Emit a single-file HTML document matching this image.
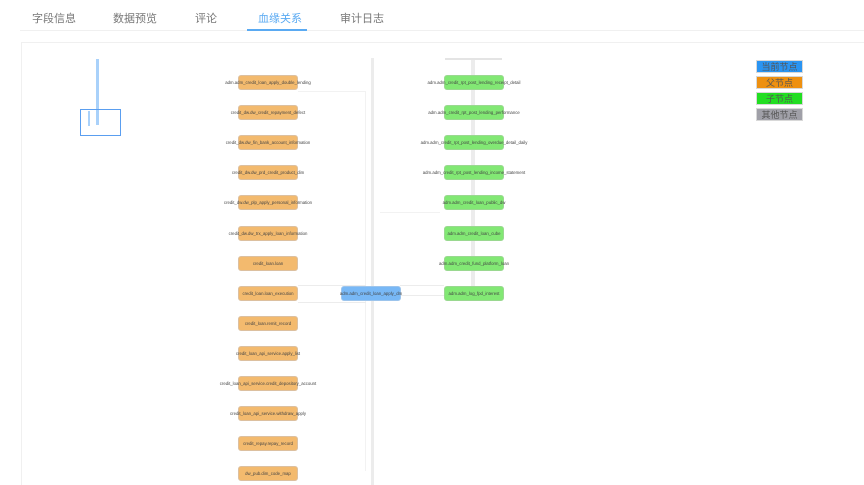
<!DOCTYPE html>
<html><head><meta charset="utf-8"><style>
body{margin:0;width:864px;height:485px;background:#fff;font-family:"Liberation Sans","Noto Sans CJK SC",sans-serif;position:relative;overflow:hidden}
.tab{position:absolute;top:10px;font-size:11px;color:#777}
.panel{position:absolute;left:21px;top:42px;right:0;bottom:0;border:1px solid #f0f0f0;border-right:none;border-bottom:none}
.n{position:absolute;width:60px;height:15px;border-radius:3px;box-sizing:border-box;font-size:4.3px;color:#444;line-height:14px;text-align:center;white-space:nowrap;overflow:visible;display:flex;justify-content:center}
.o{background:#f3ba6e;border:1px solid #dcc0a0}
.g{background:#82e874;border:1px solid #9ad890}
.b{background:#78b8f6;border:1px solid #9cc4ec}
.l{position:absolute;background:#ececec}
.lg{position:absolute;left:756px;width:47px;height:13px;font-size:9px;line-height:13px;text-align:center;color:#555;border:1px solid #d8d8d8;box-sizing:border-box}
</style></head><body>
<div class="tab" style="left:32px">字段信息</div>
<div class="tab" style="left:113px">数据预览</div>
<div class="tab" style="left:195px">评论</div>
<div class="tab" style="left:258px;color:#5aaaf2">血缘关系</div>
<div class="tab" style="left:340px">审计日志</div>
<div style="position:absolute;left:20px;right:0;top:30px;height:1px;background:#f0f0f0"></div>
<div style="position:absolute;left:247px;width:60px;top:29px;height:2px;background:#5aaaf2"></div>
<div class="panel"></div>
<div style="position:absolute;left:96px;top:59px;width:3px;height:66px;background:#a9d1fa"></div>
<div style="position:absolute;left:80px;top:109px;width:39px;height:25px;border:1.5px solid #5a9ef0"></div>
<div style="position:absolute;left:88px;top:111px;width:2px;height:15px;background:#a9d1fa"></div>
<div class="l" style="left:371px;top:58px;width:3px;height:427px"></div>
<div class="l" style="left:471px;top:58px;width:4px;height:235px"></div>
<div class="l" style="left:445px;top:58px;width:57px;height:2px;background:#e4e4e4"></div>
<div class="l" style="left:298px;top:91px;width:68px;height:1px;background:#f2f2f2"></div>
<div class="l" style="left:365px;top:91px;width:1px;height:380px;background:#f2f2f2"></div>
<div class="l" style="left:298px;top:285px;width:68px;height:1px"></div>
<div class="l" style="left:298px;top:302px;width:68px;height:1px"></div>
<div class="l" style="left:380px;top:212px;width:60px;height:1px;background:#f2f2f2"></div>
<div class="l" style="left:400px;top:285px;width:44px;height:1px"></div>
<div class="l" style="left:400px;top:295px;width:44px;height:1px"></div>
<div class="n o" style="left:238px;top:75px">adm.adm_credit_loan_apply_double_lending</div>
<div class="n o" style="left:238px;top:105px">credit_dw.dw_credit_repayment_defect</div>
<div class="n o" style="left:238px;top:135px">credit_dw.dw_fin_bank_account_information</div>
<div class="n o" style="left:238px;top:165px">credit_dw.dw_prd_credit_product_dim</div>
<div class="n o" style="left:238px;top:195px">credit_dw.dw_plp_apply_personal_information</div>
<div class="n o" style="left:238px;top:226px">credit_dw.dw_trx_apply_loan_information</div>
<div class="n o" style="left:238px;top:256px">credit_loan.loan</div>
<div class="n o" style="left:238px;top:286px">credit_loan.loan_execution</div>
<div class="n o" style="left:238px;top:316px">credit_loan.remit_record</div>
<div class="n o" style="left:238px;top:346px">credit_loan_api_service.apply_list</div>
<div class="n o" style="left:238px;top:376px">credit_loan_api_service.credit_depository_account</div>
<div class="n o" style="left:238px;top:406px">credit_loan_api_service.withdraw_apply</div>
<div class="n o" style="left:238px;top:436px">credit_repay.repay_record</div>
<div class="n o" style="left:238px;top:466px">dw_pub.dim_code_map</div>
<div class="n b" style="left:341px;top:286px">adm.adm_credit_loan_apply_dm</div>
<div class="n g" style="left:444px;top:75px">adm.adm_credit_rpt_post_lending_receipt_detail</div>
<div class="n g" style="left:444px;top:105px">adm.adm_credit_rpt_post_lending_performance</div>
<div class="n g" style="left:444px;top:135px">adm.adm_credit_rpt_post_lending_overdue_detail_daily</div>
<div class="n g" style="left:444px;top:165px">adm.adm_credit_rpt_post_lending_income_statement</div>
<div class="n g" style="left:444px;top:195px">adm.adm_credit_loan_public_dw</div>
<div class="n g" style="left:444px;top:226px">adm.adm_credit_loan_cube</div>
<div class="n g" style="left:444px;top:256px">adm.adm_credit_fund_platform_loan</div>
<div class="n g" style="left:444px;top:286px">adm.adm_log_fpd_interest</div>
<div class="lg" style="top:60px;background:#2a94f2">当前节点</div>
<div class="lg" style="top:76px;background:#ee9010">父节点</div>
<div class="lg" style="top:92px;background:#22de22">子节点</div>
<div class="lg" style="top:108px;background:#a0a0a8">其他节点</div>
</body></html>
